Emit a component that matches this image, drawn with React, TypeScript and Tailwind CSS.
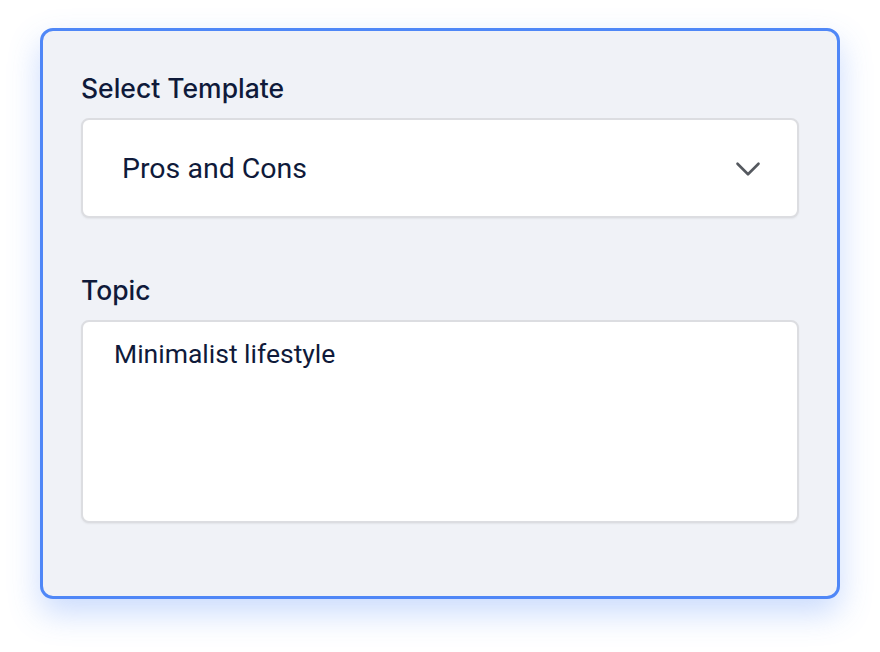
import { ChevronDown } from 'lucide-react';

export default function App() {
  return (
    <div
      className="w-[880px] h-[652px] bg-white pt-[28px] pl-[40px]"
      style={{ fontFamily: 'Inter, "Noto Sans", sans-serif' }}
    >
      <div className="w-[800px] h-[571px] rounded-[13px] border-[3px] border-[#4f87f7] bg-[#f0f2f7] px-[38px] pt-[40px] shadow-[0_14px_32px_rgba(79,135,247,0.3)]">
        {/* テンプレート選択 */}
        <label className="block text-[26.5px] leading-[34px] font-medium text-[#0f1a3a]">
          Select Template
        </label>
        <div className="mt-[13px] h-[100px] rounded-[8px] border-2 border-[#dcdde1] bg-white pl-[39px] pr-[28px] flex items-center justify-between shadow-[0_1px_2px_rgba(0,0,0,0.06)]">
          <span
            className="text-[28.5px] leading-[34px] text-[#0f1a3a] translate-y-[1px]"
            style={{ fontFamily: 'Roboto, "Noto Sans", sans-serif' }}
          >
            Pros and Cons
          </span>
          <ChevronDown className="w-[42px] h-[42px] text-[#55595f] translate-y-[1px]" strokeWidth={1.5} />
        </div>

        {/* トピック */}
        <label className="block mt-[55px] text-[26.5px] leading-[34px] font-medium text-[#0f1a3a]">
          Topic
        </label>
        <div className="mt-[13px] h-[203px] rounded-[8px] border-2 border-[#dcdde1] bg-white pl-[31px] pt-[16px] shadow-[0_1px_2px_rgba(0,0,0,0.06)]">
          <span
            className="text-[26.5px] leading-[32px] text-[#0f1a3a]"
            style={{ fontFamily: 'Roboto, "Noto Sans", sans-serif' }}
          >
            Minimalist lifestyle
          </span>
        </div>
      </div>
    </div>
  );
}
